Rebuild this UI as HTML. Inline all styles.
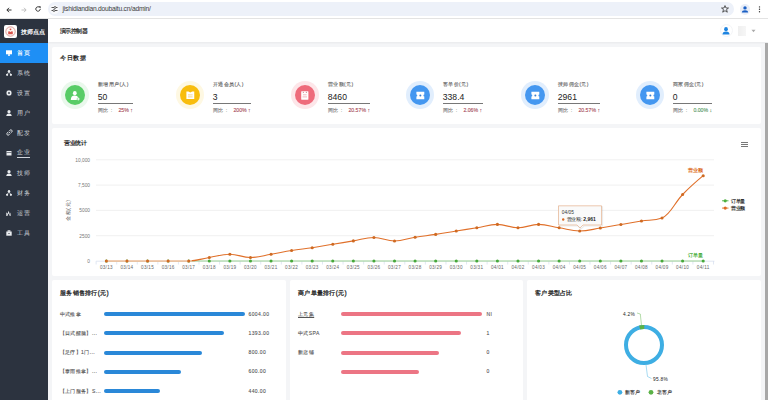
<!DOCTYPE html>
<html><head><meta charset="utf-8">
<style>
*{margin:0;padding:0;box-sizing:border-box}
html,body{width:768px;height:400px;overflow:hidden;background:#f4f5f7;font-family:"Liberation Sans",sans-serif;color:#333}
.abs{position:absolute}
#chrome{position:absolute;left:0;top:0;width:768px;height:19px;background:#fff;border-bottom:1px solid #e3e3e3}
#addr{position:absolute;left:48px;top:2px;width:686px;height:14px;border-radius:7px;background:#edf1f9}
#side{position:absolute;left:0;top:19px;width:48px;height:381px;background:#2c333f}
#hdr{position:absolute;left:48px;top:19px;width:720px;height:23px;background:#fff;box-shadow:0 1px 2px rgba(0,0,0,0.05)}
.card{position:absolute;background:#fff;border-radius:2px}
.mi{position:absolute;left:0;width:48px;height:20px;color:#d2d6dc;font-size:6px;letter-spacing:0.3px}
.mi span{position:absolute;left:17.3px;top:6.8px;line-height:8px}
.mi svg{position:absolute;left:6px;top:7px}
.stat .c1{position:absolute;width:28px;height:28px;border-radius:50%}
.stat .c2{position:absolute;left:3px;top:3px;width:22px;height:22px;border-radius:50%}
.lbl{position:absolute;font-size:5px;letter-spacing:0.4px;color:#666;-webkit-text-stroke:0.12px #666;white-space:nowrap;line-height:7px}
.num{position:absolute;font-size:8.6px;color:#222;line-height:10px}
.ul{position:absolute;height:1px;background:#777;width:35.5px}
.cmp{position:absolute;font-size:5.2px;color:#777;-webkit-text-stroke:0.1px #777;white-space:nowrap;line-height:6px}
.cmp b{font-weight:normal;color:#c03048;margin-left:3.5px;letter-spacing:0}
.cmp b.g{color:#3aa64c}
.title{position:absolute;font-size:6.6px;font-weight:bold;color:#222;line-height:9px;white-space:nowrap}
.xl{font-size:4.6px;letter-spacing:0.3px;fill:#666;font-family:"Liberation Sans",sans-serif}
.yl{font-size:4.8px;fill:#777;font-family:"Liberation Sans",sans-serif}
.rk{position:absolute;font-size:5px;letter-spacing:0.4px;color:#555;-webkit-text-stroke:0.1px #555;white-space:nowrap;line-height:7px}
.bar{position:absolute;height:4px;border-radius:2px}
</style></head><body>
<div id="chrome">
  <svg class="abs" style="left:6px;top:6.5px" width="6" height="6" viewBox="0 0 6 6"><path d="M5.5 3H0.9M3 0.8L0.9 3L3 5.2" fill="none" stroke="#333" stroke-width="1"/></svg>
  <svg class="abs" style="left:20.5px;top:6.5px" width="6" height="6" viewBox="0 0 6 6"><path d="M0.5 3H5.1M3 0.8L5.1 3L3 5.2" fill="none" stroke="#bbb" stroke-width="0.9"/></svg>
  <svg class="abs" style="left:34.5px;top:6.4px" width="6" height="6" viewBox="0 0 6 6"><path d="M5.2 3A2.2 2.2 0 1 1 4.4 1.3" fill="none" stroke="#333" stroke-width="1"/><path d="M3.4 0.3L5.6 0.3L5.6 2.5Z" fill="#333"/></svg>
  <div id="addr">
    <div class="abs" style="left:1.5px;top:2.5px;width:9px;height:9px;border-radius:50%;background:#f8f9fc"></div><svg class="abs" style="left:2.5px;top:4px" width="7" height="6" viewBox="0 0 7 6"><path d="M0.5 1.5H3M5 1.5H6.5M0.5 4.5H2M4 4.5H6.5" stroke="#444" stroke-width="0.9"/><circle cx="4" cy="1.5" r="1" fill="none" stroke="#444" stroke-width="0.8"/><circle cx="3" cy="4.5" r="1" fill="none" stroke="#444" stroke-width="0.8"/></svg>
    <div class="abs" style="left:14.5px;top:3.3px;font-size:6.7px;line-height:7px;color:#3c3c3c;white-space:nowrap;letter-spacing:-0.22px">jishidiandian.doubaitu.cn/admin/</div>
    <svg class="abs" style="left:673px;top:3px" width="8" height="8" viewBox="0 0 8 8"><path d="M4 0.6L5 3H7.5L5.5 4.6L6.3 7.2L4 5.7L1.7 7.2L2.5 4.6L0.5 3H3Z" fill="none" stroke="#333" stroke-width="0.8"/></svg>
  </div>
  <div class="abs" style="left:739.5px;top:4px;width:10.5px;height:10.5px;border-radius:50%;background:#e9eef8"></div>
  <svg class="abs" style="left:740.8px;top:5px" width="8" height="9" viewBox="0 0 8 9"><circle cx="4" cy="2.9" r="1.7" fill="#1a5fc4"/><path d="M0.9 7.6Q0.9 5.2 4 5.2Q7.1 5.2 7.1 7.6Z" fill="#1a5fc4"/></svg>
  <svg class="abs" style="left:758px;top:5px" width="3" height="9" viewBox="0 0 3 9"><circle cx="1.5" cy="1.9" r="0.7" fill="#333"/><circle cx="1.5" cy="4.3" r="0.7" fill="#333"/><circle cx="1.5" cy="6.7" r="0.7" fill="#333"/></svg>
</div>

<div id="side">
  <div class="abs" style="left:4px;top:6px;width:13px;height:13px;border-radius:2px;background:#fff"></div>
  <svg class="abs" style="left:4px;top:6px" width="13" height="13" viewBox="0 0 13 13"><circle cx="6.5" cy="6.5" r="4.7" fill="#fff8f4" stroke="#c8605a" stroke-width="0.6"/><circle cx="6.5" cy="4.3" r="0.9" fill="#d8514a"/><path d="M4.2 9.2V7Q4.2 5.9 5.3 6.3L6.5 6.9L7.7 6.3Q8.8 5.9 8.8 7V9.2Z" fill="#d8514a"/></svg>
  <div class="abs" style="left:20.5px;top:8.5px;font-size:6px;line-height:8px;color:#fff;white-space:nowrap;font-weight:bold">技师点点</div>
  <div class="mi" style="top:23.5px;background:#1e8ff5;color:#fff"><svg width="6" height="6" viewBox="0 0 6 6"><rect x="0" y="0.3" width="6" height="4" fill="#fff"/><rect x="2" y="4.3" width="2" height="1.5" fill="#fff"/></svg><span style="-webkit-text-stroke:0.15px #fff">首页</span></div>
  <div class="mi" style="top:43.5px"><svg width="6" height="6" viewBox="0 0 6 6"><circle cx="3" cy="1.2" r="1.2" fill="#e9ecef"/><circle cx="1.1" cy="4.8" r="1.1" fill="#e9ecef"/><circle cx="4.9" cy="4.8" r="1.1" fill="#e9ecef"/><path d="M3 1.5L1.1 4.8M3 1.5L4.9 4.8" stroke="#e9ecef" stroke-width="0.7"/></svg><span>系统</span></div>
  <div class="mi" style="top:63.5px"><svg width="6" height="6" viewBox="0 0 6 6"><path d="M5.11 2.39 L5.96 2.50 L5.96 3.50 L5.11 3.61 L4.92 4.07 L5.45 4.74 L4.74 5.45 L4.07 4.92 L3.61 5.11 L3.50 5.96 L2.50 5.96 L2.39 5.11 L1.93 4.92 L1.26 5.45 L0.55 4.74 L1.08 4.07 L0.89 3.61 L0.04 3.50 L0.04 2.50 L0.89 2.39 L1.08 1.93 L0.55 1.26 L1.26 0.55 L1.93 1.08 L2.39 0.89 L2.50 0.04 L3.50 0.04 L3.61 0.89 L4.07 1.08 L4.74 0.55 L5.45 1.26 L4.92 1.93Z" fill="#e9ecef"/><circle cx="3" cy="3" r="0.9" fill="#2c333f"/></svg><span>设置</span></div>
  <div class="mi" style="top:83.5px"><svg width="6" height="6" viewBox="0 0 6 6"><circle cx="3" cy="1.7" r="1.6" fill="#e9ecef"/><path d="M0.3 6Q0.3 3.5 3 3.5Q5.7 3.5 5.7 6Z" fill="#e9ecef"/></svg><span>用户</span></div>
  <div class="mi" style="top:103.5px"><svg width="7" height="7" viewBox="0 0 7 7" style="left:5.5px;top:6.2px"><path d="M2.7 4.3L4.3 2.7M2.3 2.9L1.2 4A1.25 1.25 0 0 0 3 5.8L4.1 4.7M4.7 4.1L5.8 3A1.25 1.25 0 0 0 4 1.2L2.9 2.3" fill="none" stroke="#e9ecef" stroke-width="0.9"/></svg><span>配发</span></div>
  <div class="mi" style="top:123.5px"><svg width="6" height="6" viewBox="0 0 6 6"><rect x="0.5" y="1" width="5" height="4.5" fill="#e9ecef"/><rect x="0.5" y="2.3" width="5" height="0.6" fill="#2c333f"/></svg><span style="border-bottom:0.6px solid #d2d6dc;line-height:7.5px">企业</span></div>
  <div class="mi" style="top:143.5px"><svg width="6" height="6" viewBox="0 0 6 6"><circle cx="3" cy="1.7" r="1.6" fill="#e9ecef"/><path d="M0.3 6Q0.3 3.5 3 3.5Q5.7 3.5 5.7 6Z" fill="#e9ecef"/></svg><span>技师</span></div>
  <div class="mi" style="top:163.5px"><svg width="6" height="6" viewBox="0 0 6 6"><circle cx="3" cy="1.2" r="1.2" fill="#e9ecef"/><circle cx="1.1" cy="4.8" r="1.1" fill="#e9ecef"/><circle cx="4.9" cy="4.8" r="1.1" fill="#e9ecef"/><path d="M3 1.5L1.1 4.8M3 1.5L4.9 4.8" stroke="#e9ecef" stroke-width="0.7"/></svg><span>财务</span></div>
  <div class="mi" style="top:183.5px"><svg width="6" height="6" viewBox="0 0 6 6"><path d="M0.3 6V2.2L1.6 3.8L2.6 0.8L3.8 4.2L4.6 2.6V6H3.6V5L2.6 3.6L1.6 5V6Z" fill="#e9ecef"/></svg><span>运营</span></div>
  <div class="mi" style="top:203.5px"><svg width="6" height="6" viewBox="0 0 6 6"><rect x="0.3" y="1.5" width="5.4" height="4.2" fill="#e9ecef"/><rect x="2" y="0.4" width="2" height="1.3" fill="none" stroke="#e9ecef" stroke-width="0.6"/><rect x="2.5" y="3" width="1" height="1" fill="#2c333f"/></svg><span>工具</span></div>
</div>

<div id="hdr">
  <div class="abs" style="left:11.5px;top:8.6px;font-size:6px;letter-spacing:-0.4px;line-height:7px;color:#222;white-space:nowrap;-webkit-text-stroke:0.2px #222">演示控制器</div>
  <div class="abs" style="left:671.5px;top:5px;width:13px;height:13px;border-radius:50%;background:#fff;border:0.5px solid #f4f5f7"></div>
  <svg class="abs" style="left:674px;top:7.5px" width="8" height="8" viewBox="0 0 8 8"><ellipse cx="4" cy="2.2" rx="1.9" ry="2.1" fill="#1e84e0"/><path d="M0.5 7.4Q0.5 4.4 4 4.4Q7.5 4.4 7.5 7.4Z" fill="#1e84e0"/></svg>
  <div class="abs" style="left:690px;top:6.7px;width:7.5px;height:10.6px;background:linear-gradient(90deg,#efefef,#f6f6f6)"></div>
  <svg class="abs" style="left:703px;top:10px" width="5" height="4" viewBox="0 0 5 4"><path d="M0.5 0.8H4.5L2.5 3.2Z" fill="#aaa"/></svg>
</div>

<div class="card" style="left:52px;top:46.5px;width:709px;height:77px">
  <div class="title" style="left:8px;top:7px;font-size:6px;letter-spacing:0.6px">今日数据</div>
</div>
<div class="stat"><div class="abs c1" style="left:61.0px;top:81.0px;width:28px;height:28px;border-radius:50%;background:#eaf8ec"></div><div class="abs" style="left:65.0px;top:85.0px;width:20px;height:20px;border-radius:50%;background:#58cc66"></div>
<svg class="abs" style="left:69.5px;top:89.5px" width="11" height="11" viewBox="0 0 11 11"><ellipse cx="4.8" cy="3.2" rx="1.9" ry="2.1" fill="#fff"/><path d="M0.8 10Q0.8 5.6 4.8 5.6Q7.4 5.6 8.2 7.3L6.8 8.6V10Z" fill="#fff"/><path d="M8.3 7.6V10.4M6.9 9H9.7" stroke="#fff" stroke-width="0.9"/></svg>
<div class="lbl" style="left:97.8px;top:81px">新增用户(人)</div>
<div class="num" style="left:97.8px;top:92px">50</div>
<div class="ul" style="left:97.8px;top:103px;width:35.5px"></div>
<div class="cmp" style="left:97.8px;top:107px;letter-spacing:0.7px">同比：<b>25% ↑</b></div></div>
<div class="stat"><div class="abs c1" style="left:176.0px;top:81.0px;width:28px;height:28px;border-radius:50%;background:#fef8e2"></div><div class="abs" style="left:180.0px;top:85.0px;width:20px;height:20px;border-radius:50%;background:#f8bd0e"></div>
<svg class="abs" style="left:184.5px;top:89.5px" width="11" height="11" viewBox="0 0 11 11"><path d="M1.4 1.4H3.4L5.3 2.6L7.2 1.4H9.25V8.9H1.4Z" fill="#fff"/><path d="M3 4.9H7.6M3 6.9H7.6" stroke="#e8b84a" stroke-width="0.6"/></svg>
<div class="lbl" style="left:212.8px;top:81px">开通会员(人)</div>
<div class="num" style="left:212.8px;top:92px">3</div>
<div class="ul" style="left:212.8px;top:103px;width:38.0px"></div>
<div class="cmp" style="left:212.8px;top:107px;letter-spacing:0.7px">同比：<b>200% ↑</b></div></div>
<div class="stat"><div class="abs c1" style="left:291.0px;top:81.0px;width:28px;height:28px;border-radius:50%;background:#fde6e9"></div><div class="abs" style="left:295.0px;top:85.0px;width:20px;height:20px;border-radius:50%;background:#ee6b7b"></div>
<svg class="abs" style="left:299.5px;top:89.5px" width="11" height="11" viewBox="0 0 11 11"><rect x="1.2" y="1.3" width="7.2" height="8.4" rx="0.4" fill="#fff"/><circle cx="3.3" cy="2.2" r="0.5" fill="#b05060"/><circle cx="6.3" cy="2.2" r="0.5" fill="#b05060"/><path d="M3 4.8H6.6M2.6 6.9H7" stroke="#e88a96" stroke-width="0.6"/></svg>
<div class="lbl" style="left:327.8px;top:81px">营业额(元)</div>
<div class="num" style="left:327.8px;top:92px">8460</div>
<div class="ul" style="left:327.8px;top:103px;width:42.7px"></div>
<div class="cmp" style="left:327.8px;top:107px;letter-spacing:0.7px">同比：<b>20.57% ↑</b></div></div>
<div class="stat"><div class="abs c1" style="left:406.0px;top:81.0px;width:28px;height:28px;border-radius:50%;background:#e1eefd"></div><div class="abs" style="left:410.0px;top:85.0px;width:20px;height:20px;border-radius:50%;background:#4497f0"></div>
<svg class="abs" style="left:414.5px;top:89.5px" width="11" height="11" viewBox="0 0 11 11"><path d="M1.4 1.75H9.3V4.6A0.9 0.9 0 0 0 9.3 6.4V9.25H1.4V6.4A0.9 0.9 0 0 0 1.4 4.6Z" fill="#fff"/><circle cx="5.35" cy="5.5" r="1" fill="#3a7fd0"/></svg>
<div class="lbl" style="left:442.8px;top:81px">客单价(元)</div>
<div class="num" style="left:442.8px;top:92px">338.4</div>
<div class="ul" style="left:442.8px;top:103px;width:39.8px"></div>
<div class="cmp" style="left:442.8px;top:107px;letter-spacing:0.7px">同比：<b>2.06% ↑</b></div></div>
<div class="stat"><div class="abs c1" style="left:521.0px;top:81.0px;width:28px;height:28px;border-radius:50%;background:#e1eefd"></div><div class="abs" style="left:525.0px;top:85.0px;width:20px;height:20px;border-radius:50%;background:#4497f0"></div>
<svg class="abs" style="left:529.5px;top:89.5px" width="11" height="11" viewBox="0 0 11 11"><path d="M1.4 1.75H9.3V4.6A0.9 0.9 0 0 0 9.3 6.4V9.25H1.4V6.4A0.9 0.9 0 0 0 1.4 4.6Z" fill="#fff"/><circle cx="5.35" cy="5.5" r="1" fill="#3a7fd0"/></svg>
<div class="lbl" style="left:557.8px;top:81px">技师佣金(元)</div>
<div class="num" style="left:557.8px;top:92px">2961</div>
<div class="ul" style="left:557.8px;top:103px;width:42.6px"></div>
<div class="cmp" style="left:557.8px;top:107px;letter-spacing:0.7px">同比：<b>20.57% ↑</b></div></div>
<div class="stat"><div class="abs c1" style="left:636.0px;top:81.0px;width:28px;height:28px;border-radius:50%;background:#e1eefd"></div><div class="abs" style="left:640.0px;top:85.0px;width:20px;height:20px;border-radius:50%;background:#4497f0"></div>
<svg class="abs" style="left:644.5px;top:89.5px" width="11" height="11" viewBox="0 0 11 11"><path d="M1.4 1.75H9.3V4.6A0.9 0.9 0 0 0 9.3 6.4V9.25H1.4V6.4A0.9 0.9 0 0 0 1.4 4.6Z" fill="#fff"/><circle cx="5.35" cy="5.5" r="1" fill="#3a7fd0"/></svg>
<div class="lbl" style="left:672.8px;top:81px">商家佣金(元)</div>
<div class="num" style="left:672.8px;top:92px">0</div>
<div class="ul" style="left:672.8px;top:103px;width:39.4px"></div>
<div class="cmp" style="left:672.8px;top:107px;letter-spacing:0.7px">同比：<b class="g">0.00% ↓</b></div></div>

<div class="card" style="left:52px;top:127.5px;width:709px;height:148px"></div>
<svg class="abs" style="left:0;top:0" width="768" height="400" viewBox="0 0 768 400">
<line x1="96" y1="159.8" x2="714" y2="159.8" stroke="#e6e6e6" stroke-width="0.6"/>
<line x1="96" y1="185.1" x2="714" y2="185.1" stroke="#e6e6e6" stroke-width="0.6"/>
<line x1="96" y1="210.4" x2="714" y2="210.4" stroke="#e6e6e6" stroke-width="0.6"/>
<line x1="96" y1="235.7" x2="714" y2="235.7" stroke="#e6e6e6" stroke-width="0.6"/>
<line x1="96.2" y1="261.2" x2="714.5" y2="261.2" stroke="#ccd6eb" stroke-width="0.6"/>
<line x1="96.11" y1="261.2" x2="96.11" y2="264.5" stroke="#ccd6eb" stroke-width="0.6"/>
<line x1="116.69" y1="261.2" x2="116.69" y2="264.5" stroke="#ccd6eb" stroke-width="0.6"/>
<line x1="137.27" y1="261.2" x2="137.27" y2="264.5" stroke="#ccd6eb" stroke-width="0.6"/>
<line x1="157.85" y1="261.2" x2="157.85" y2="264.5" stroke="#ccd6eb" stroke-width="0.6"/>
<line x1="178.43" y1="261.2" x2="178.43" y2="264.5" stroke="#ccd6eb" stroke-width="0.6"/>
<line x1="199.01" y1="261.2" x2="199.01" y2="264.5" stroke="#ccd6eb" stroke-width="0.6"/>
<line x1="219.59" y1="261.2" x2="219.59" y2="264.5" stroke="#ccd6eb" stroke-width="0.6"/>
<line x1="240.17" y1="261.2" x2="240.17" y2="264.5" stroke="#ccd6eb" stroke-width="0.6"/>
<line x1="260.74" y1="261.2" x2="260.74" y2="264.5" stroke="#ccd6eb" stroke-width="0.6"/>
<line x1="281.32" y1="261.2" x2="281.32" y2="264.5" stroke="#ccd6eb" stroke-width="0.6"/>
<line x1="301.90" y1="261.2" x2="301.90" y2="264.5" stroke="#ccd6eb" stroke-width="0.6"/>
<line x1="322.48" y1="261.2" x2="322.48" y2="264.5" stroke="#ccd6eb" stroke-width="0.6"/>
<line x1="343.06" y1="261.2" x2="343.06" y2="264.5" stroke="#ccd6eb" stroke-width="0.6"/>
<line x1="363.64" y1="261.2" x2="363.64" y2="264.5" stroke="#ccd6eb" stroke-width="0.6"/>
<line x1="384.22" y1="261.2" x2="384.22" y2="264.5" stroke="#ccd6eb" stroke-width="0.6"/>
<line x1="404.80" y1="261.2" x2="404.80" y2="264.5" stroke="#ccd6eb" stroke-width="0.6"/>
<line x1="425.38" y1="261.2" x2="425.38" y2="264.5" stroke="#ccd6eb" stroke-width="0.6"/>
<line x1="445.96" y1="261.2" x2="445.96" y2="264.5" stroke="#ccd6eb" stroke-width="0.6"/>
<line x1="466.54" y1="261.2" x2="466.54" y2="264.5" stroke="#ccd6eb" stroke-width="0.6"/>
<line x1="487.12" y1="261.2" x2="487.12" y2="264.5" stroke="#ccd6eb" stroke-width="0.6"/>
<line x1="507.70" y1="261.2" x2="507.70" y2="264.5" stroke="#ccd6eb" stroke-width="0.6"/>
<line x1="528.28" y1="261.2" x2="528.28" y2="264.5" stroke="#ccd6eb" stroke-width="0.6"/>
<line x1="548.86" y1="261.2" x2="548.86" y2="264.5" stroke="#ccd6eb" stroke-width="0.6"/>
<line x1="569.43" y1="261.2" x2="569.43" y2="264.5" stroke="#ccd6eb" stroke-width="0.6"/>
<line x1="590.01" y1="261.2" x2="590.01" y2="264.5" stroke="#ccd6eb" stroke-width="0.6"/>
<line x1="610.59" y1="261.2" x2="610.59" y2="264.5" stroke="#ccd6eb" stroke-width="0.6"/>
<line x1="631.17" y1="261.2" x2="631.17" y2="264.5" stroke="#ccd6eb" stroke-width="0.6"/>
<line x1="651.75" y1="261.2" x2="651.75" y2="264.5" stroke="#ccd6eb" stroke-width="0.6"/>
<line x1="672.33" y1="261.2" x2="672.33" y2="264.5" stroke="#ccd6eb" stroke-width="0.6"/>
<line x1="692.91" y1="261.2" x2="692.91" y2="264.5" stroke="#ccd6eb" stroke-width="0.6"/>
<line x1="713.49" y1="261.2" x2="713.49" y2="264.5" stroke="#ccd6eb" stroke-width="0.6"/>
<line x1="106.40" y1="261" x2="703.20" y2="261" stroke="#9ed493" stroke-width="1.1"/>
<circle cx="106.40" cy="261" r="1.55" fill="#46a83a"/>
<circle cx="126.98" cy="261" r="1.55" fill="#46a83a"/>
<circle cx="147.56" cy="261" r="1.55" fill="#46a83a"/>
<circle cx="168.14" cy="261" r="1.55" fill="#46a83a"/>
<circle cx="188.72" cy="261" r="1.55" fill="#46a83a"/>
<circle cx="209.30" cy="261" r="1.55" fill="#46a83a"/>
<circle cx="229.88" cy="261" r="1.55" fill="#46a83a"/>
<circle cx="250.46" cy="261" r="1.55" fill="#46a83a"/>
<circle cx="271.03" cy="261" r="1.55" fill="#46a83a"/>
<circle cx="291.61" cy="261" r="1.55" fill="#46a83a"/>
<circle cx="312.19" cy="261" r="1.55" fill="#46a83a"/>
<circle cx="332.77" cy="261" r="1.55" fill="#46a83a"/>
<circle cx="353.35" cy="261" r="1.55" fill="#46a83a"/>
<circle cx="373.93" cy="261" r="1.55" fill="#46a83a"/>
<circle cx="394.51" cy="261" r="1.55" fill="#46a83a"/>
<circle cx="415.09" cy="261" r="1.55" fill="#46a83a"/>
<circle cx="435.67" cy="261" r="1.55" fill="#46a83a"/>
<circle cx="456.25" cy="261" r="1.55" fill="#46a83a"/>
<circle cx="476.83" cy="261" r="1.55" fill="#46a83a"/>
<circle cx="497.41" cy="261" r="1.55" fill="#46a83a"/>
<circle cx="517.99" cy="261" r="1.55" fill="#46a83a"/>
<circle cx="538.57" cy="261" r="1.55" fill="#46a83a"/>
<circle cx="559.14" cy="261" r="1.55" fill="#46a83a"/>
<circle cx="579.72" cy="261" r="1.55" fill="#46a83a"/>
<circle cx="600.30" cy="261" r="1.55" fill="#46a83a"/>
<circle cx="620.88" cy="261" r="1.55" fill="#46a83a"/>
<circle cx="641.46" cy="261" r="1.55" fill="#46a83a"/>
<circle cx="662.04" cy="261" r="1.55" fill="#46a83a"/>
<circle cx="682.62" cy="261" r="1.55" fill="#46a83a"/>
<circle cx="703.20" cy="261" r="1.55" fill="#46a83a"/>
<path d="M 106.40 261.00 C 106.40 261.00 118.75 261.00 126.98 261.00 C 135.21 261.00 139.33 261.00 147.56 261.00 C 155.79 261.00 159.91 261.00 168.14 261.00 C 176.37 261.00 180.49 261.00 188.72 261.00 C 196.95 261.00 201.06 258.84 209.30 257.50 C 217.53 256.16 221.64 254.30 229.88 254.30 C 238.11 254.30 242.22 257.50 250.46 257.50 C 258.69 257.50 262.80 255.70 271.03 254.30 C 279.27 252.90 283.38 251.82 291.61 250.50 C 299.85 249.18 303.96 248.94 312.19 247.70 C 320.42 246.46 324.54 245.66 332.77 244.30 C 341.00 242.94 345.12 242.26 353.35 240.90 C 361.58 239.54 365.70 237.50 373.93 237.50 C 382.16 237.50 386.28 241.00 394.51 241.00 C 402.74 241.00 406.86 238.52 415.09 237.20 C 423.32 235.88 427.44 235.64 435.67 234.40 C 443.90 233.16 448.02 232.32 456.25 231.00 C 464.48 229.68 468.60 229.12 476.83 227.80 C 485.06 226.48 489.18 224.40 497.41 224.40 C 505.64 224.40 509.75 227.80 517.99 227.80 C 526.22 227.80 530.33 224.40 538.57 224.40 C 546.80 224.40 550.91 226.48 559.14 227.80 C 567.38 229.12 571.49 231.00 579.72 231.00 C 587.96 231.00 592.07 229.30 600.30 228.00 C 608.54 226.70 612.65 225.90 620.88 224.50 C 629.11 223.10 633.23 222.30 641.46 221.00 C 649.69 219.70 653.81 221.00 662.04 218.00 C 670.27 215.00 674.39 202.96 682.62 194.50 C 690.85 186.04 703.20 175.70 703.20 175.70" fill="none" stroke="#e0702a" stroke-width="1.1"/>
<line x1="106.40" y1="260.8" x2="191.72" y2="260.8" stroke="#f0cdb2" stroke-width="1.7"/>
<circle cx="106.40" cy="261.00" r="1.55" fill="#cf6a22"/>
<circle cx="126.98" cy="261.00" r="1.55" fill="#cf6a22"/>
<circle cx="147.56" cy="261.00" r="1.55" fill="#cf6a22"/>
<circle cx="168.14" cy="261.00" r="1.55" fill="#cf6a22"/>
<circle cx="188.72" cy="261.00" r="1.55" fill="#cf6a22"/>
<circle cx="209.30" cy="257.50" r="1.55" fill="#cf6a22"/>
<circle cx="229.88" cy="254.30" r="1.55" fill="#cf6a22"/>
<circle cx="250.46" cy="257.50" r="1.55" fill="#cf6a22"/>
<circle cx="271.03" cy="254.30" r="1.55" fill="#cf6a22"/>
<circle cx="291.61" cy="250.50" r="1.55" fill="#cf6a22"/>
<circle cx="312.19" cy="247.70" r="1.55" fill="#cf6a22"/>
<circle cx="332.77" cy="244.30" r="1.55" fill="#cf6a22"/>
<circle cx="353.35" cy="240.90" r="1.55" fill="#cf6a22"/>
<circle cx="373.93" cy="237.50" r="1.55" fill="#cf6a22"/>
<circle cx="394.51" cy="241.00" r="1.55" fill="#cf6a22"/>
<circle cx="415.09" cy="237.20" r="1.55" fill="#cf6a22"/>
<circle cx="435.67" cy="234.40" r="1.55" fill="#cf6a22"/>
<circle cx="456.25" cy="231.00" r="1.55" fill="#cf6a22"/>
<circle cx="476.83" cy="227.80" r="1.55" fill="#cf6a22"/>
<circle cx="497.41" cy="224.40" r="1.55" fill="#cf6a22"/>
<circle cx="517.99" cy="227.80" r="1.55" fill="#cf6a22"/>
<circle cx="538.57" cy="224.40" r="1.55" fill="#cf6a22"/>
<circle cx="559.14" cy="227.80" r="1.55" fill="#cf6a22"/>
<circle cx="579.72" cy="231.00" r="1.55" fill="#cf6a22"/>
<circle cx="600.30" cy="228.00" r="1.55" fill="#cf6a22"/>
<circle cx="620.88" cy="224.50" r="1.55" fill="#cf6a22"/>
<circle cx="641.46" cy="221.00" r="1.55" fill="#cf6a22"/>
<circle cx="662.04" cy="218.00" r="1.55" fill="#cf6a22"/>
<circle cx="682.62" cy="194.50" r="1.55" fill="#cf6a22"/>
<circle cx="703.20" cy="175.70" r="1.55" fill="#cf6a22"/>
<text x="106.40" y="269" text-anchor="middle" class="xl">03/13</text>
<text x="126.98" y="269" text-anchor="middle" class="xl">03/14</text>
<text x="147.56" y="269" text-anchor="middle" class="xl">03/15</text>
<text x="168.14" y="269" text-anchor="middle" class="xl">03/16</text>
<text x="188.72" y="269" text-anchor="middle" class="xl">03/17</text>
<text x="209.30" y="269" text-anchor="middle" class="xl">03/18</text>
<text x="229.88" y="269" text-anchor="middle" class="xl">03/19</text>
<text x="250.46" y="269" text-anchor="middle" class="xl">03/20</text>
<text x="271.03" y="269" text-anchor="middle" class="xl">03/21</text>
<text x="291.61" y="269" text-anchor="middle" class="xl">03/22</text>
<text x="312.19" y="269" text-anchor="middle" class="xl">03/23</text>
<text x="332.77" y="269" text-anchor="middle" class="xl">03/24</text>
<text x="353.35" y="269" text-anchor="middle" class="xl">03/25</text>
<text x="373.93" y="269" text-anchor="middle" class="xl">03/26</text>
<text x="394.51" y="269" text-anchor="middle" class="xl">03/27</text>
<text x="415.09" y="269" text-anchor="middle" class="xl">03/28</text>
<text x="435.67" y="269" text-anchor="middle" class="xl">03/29</text>
<text x="456.25" y="269" text-anchor="middle" class="xl">03/30</text>
<text x="476.83" y="269" text-anchor="middle" class="xl">03/31</text>
<text x="497.41" y="269" text-anchor="middle" class="xl">04/01</text>
<text x="517.99" y="269" text-anchor="middle" class="xl">04/02</text>
<text x="538.57" y="269" text-anchor="middle" class="xl">04/03</text>
<text x="559.14" y="269" text-anchor="middle" class="xl">04/04</text>
<text x="579.72" y="269" text-anchor="middle" class="xl">04/05</text>
<text x="600.30" y="269" text-anchor="middle" class="xl">04/06</text>
<text x="620.88" y="269" text-anchor="middle" class="xl">04/07</text>
<text x="641.46" y="269" text-anchor="middle" class="xl">04/08</text>
<text x="662.04" y="269" text-anchor="middle" class="xl">04/09</text>
<text x="682.62" y="269" text-anchor="middle" class="xl">04/10</text>
<text x="703.20" y="269" text-anchor="middle" class="xl">04/11</text>
<text x="64" y="145" style="font-size:6px;letter-spacing:-0.3px;font-weight:bold;fill:#222;font-family:Liberation Sans,sans-serif">营业统计</text>
<text x="90" y="161.8" text-anchor="end" class="yl">10,000</text>
<text x="90" y="187.1" text-anchor="end" class="yl">7,500</text>
<text x="90" y="212.4" text-anchor="end" class="yl">5000</text>
<text x="90" y="237.7" text-anchor="end" class="yl">2500</text>
<text x="90" y="263.2" text-anchor="end" class="yl">0</text>
<text transform="translate(70.3 210.2) rotate(-90)" text-anchor="middle" class="yl" style="font-size:5px;letter-spacing:0.7px;fill:#555">金额(元)</text>
<path d="M741 142.5H748M741 144.5H748M741 146.5H748" stroke="#555" stroke-width="0.8"/>
<line x1="722" y1="200.8" x2="728.5" y2="200.8" stroke="#4caf3f" stroke-width="0.9"/><circle cx="725.2" cy="200.8" r="1.6" fill="#4caf3f"/><text x="731" y="202.6" style="font-size:5px;letter-spacing:-0.4px;font-weight:bold;fill:#333;font-family:Liberation Sans,sans-serif">订单量</text>
<line x1="722" y1="208.1" x2="728.5" y2="208.1" stroke="#e0702a" stroke-width="0.9"/><circle cx="725.2" cy="208.1" r="1.6" fill="#dc6a22"/><text x="731" y="209.9" style="font-size:5px;letter-spacing:-0.4px;font-weight:bold;fill:#333;font-family:Liberation Sans,sans-serif">营业额</text>
<text x="695" y="172" text-anchor="middle" style="font-size:4.8px;font-weight:bold;fill:#dc6a22;font-family:Liberation Sans,sans-serif">营业额</text>
<text x="695" y="257" text-anchor="middle" style="font-size:4.8px;font-weight:bold;fill:#4caf3f;font-family:Liberation Sans,sans-serif">订单量</text>
<path d="M559.5 206.8H602.5V226H584L581 229L578 226H559.5Z" fill="none" stroke="rgba(0,0,0,0.08)" stroke-width="1.2"/>
<path d="M558.5 205.8H601.5V225H583L580 228L577 225H558.5Z" fill="rgba(250,250,250,0.92)" stroke="#e0a47a" stroke-width="0.6"/>
<text x="561.8" y="214.3" style="font-size:4.8px;fill:#333;font-family:Liberation Sans,sans-serif">04/05</text>
<circle cx="563.2" cy="219.5" r="1.2" fill="#dc6a22"/><text x="566.5" y="221.3" style="font-size:5px;letter-spacing:-0.2px;fill:#222;font-family:Liberation Sans,sans-serif">营业额: <tspan style="font-weight:bold;font-size:5px;letter-spacing:0">2,961</tspan></text>
</svg>

<div class="card" style="left:52px;top:279.5px;width:233.5px;height:125px"></div>
<div class="card" style="left:289.7px;top:279.5px;width:233.5px;height:125px"></div>
<div class="card" style="left:526.7px;top:279.5px;width:234.3px;height:125px"></div>
<div class="title" style="left:60px;top:288px;font-size:6.4px;letter-spacing:0.3px;font-weight:normal;-webkit-text-stroke:0.25px #222">服务销售排行(元)</div>
<div class="title" style="left:298px;top:288px;font-size:6.4px;letter-spacing:0.3px;font-weight:normal;-webkit-text-stroke:0.25px #222">商户单量排行(元)</div>
<div class="title" style="left:535px;top:288px;font-size:6.4px;letter-spacing:0.3px;font-weight:normal;-webkit-text-stroke:0.25px #222">客户类型占比</div>
<div class="rk" style="left:59.5px;top:310.7px">中式推拿</div>
<div class="bar" style="left:104px;top:312.2px;width:140.7px;background:#2a88d8"></div>
<div class="rk" style="left:248.5px;top:310.7px">6004.00</div>
<div class="rk" style="left:59.5px;top:329.9px">【日式醒脑】...</div>
<div class="bar" style="left:104px;top:331.4px;width:119.6px;background:#2a88d8"></div>
<div class="rk" style="left:248.5px;top:329.9px">1393.00</div>
<div class="rk" style="left:59.5px;top:349.2px">【足疗】1门...</div>
<div class="bar" style="left:104px;top:350.7px;width:97.8px;background:#2a88d8"></div>
<div class="rk" style="left:248.5px;top:349.2px">800.00</div>
<div class="rk" style="left:59.5px;top:368.4px">【泰雨推拿】...</div>
<div class="bar" style="left:104px;top:369.9px;width:76.7px;background:#2a88d8"></div>
<div class="rk" style="left:248.5px;top:368.4px">600.00</div>
<div class="rk" style="left:59.5px;top:387.7px">【上门服务】S...</div>
<div class="bar" style="left:104px;top:389.2px;width:56.2px;background:#2a88d8"></div>
<div class="rk" style="left:248.5px;top:387.7px">440.00</div>
<div class="rk" style="left:298px;top:310.7px;text-decoration:underline;text-underline-offset:0.5px">上元集</div>
<div class="bar" style="left:341px;top:312.2px;width:140.6px;background:#ec7584"></div>
<div class="rk" style="left:486.5px;top:310.7px">NI</div>
<div class="rk" style="left:298px;top:329.9px">中式SPA</div>
<div class="bar" style="left:341px;top:331.4px;width:119.8px;background:#ec7584"></div>
<div class="rk" style="left:486.5px;top:329.9px">1</div>
<div class="rk" style="left:298px;top:349.2px">新店铺</div>
<div class="bar" style="left:341px;top:350.7px;width:98.3px;background:#ec7584"></div>
<div class="rk" style="left:486.5px;top:349.2px">0</div>
<div class="rk" style="left:298px;top:368.4px"></div>
<div class="bar" style="left:341px;top:369.9px;width:77.9px;background:#ec7584"></div>
<div class="rk" style="left:486.5px;top:368.4px">0</div>
<svg class="abs" style="left:0;top:0" width="768" height="400" viewBox="0 0 768 400"><circle cx="644" cy="345" r="18" fill="none" stroke="#3eaee3" stroke-width="4"/><path d="M639.65 327.53 A18 18 0 0 1 644.31 327.00" fill="none" stroke="#5bb246" stroke-width="4"/><path d="M641.5 325.5L640.3 314L637 313" fill="none" stroke="#5bb246" stroke-width="0.45"/><path d="M646 364.8L647.5 376.5L651.5 378.5" fill="none" stroke="#3eaee3" stroke-width="0.45"/><text x="623" y="316.3" style="font-size:4.8px;letter-spacing:0.3px;fill:#222;font-family:Liberation Sans,sans-serif">4.2%</text><text x="653" y="381" style="font-size:4.8px;letter-spacing:0.3px;fill:#222;font-family:Liberation Sans,sans-serif">95.8%</text><circle cx="619.9" cy="392.3" r="2.4" fill="#3eaee3"/><text x="625.3" y="394.3" style="font-size:5px;fill:#333;stroke:#333;stroke-width:0.12;font-family:Liberation Sans,sans-serif">新客户</text><circle cx="651" cy="392.3" r="2.4" fill="#5bb246"/><text x="656.5" y="394.3" style="font-size:5px;fill:#333;stroke:#333;stroke-width:0.12;font-family:Liberation Sans,sans-serif">老客户</text></svg>
<div class="abs" style="left:765px;top:43px;width:3px;height:357px;background:#a8a8a8"></div>
</body></html>
